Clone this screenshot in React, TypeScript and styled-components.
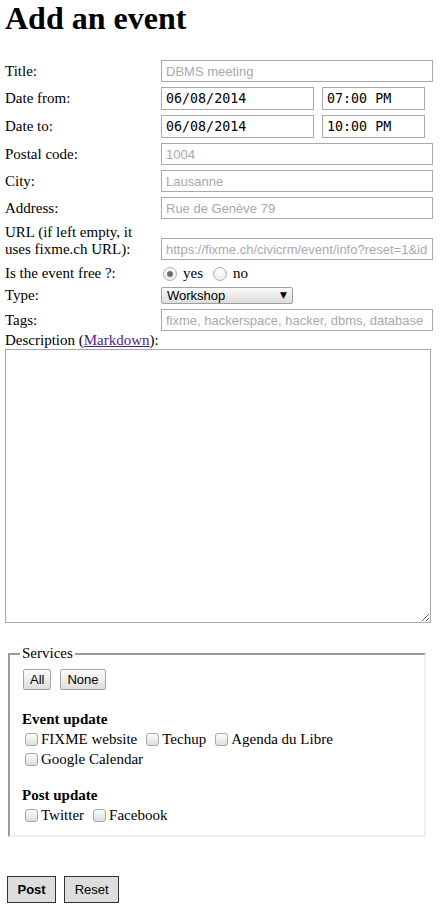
import React from "react";
import styled, { createGlobalStyle } from "styled-components";

const Global = createGlobalStyle`
  html, body { margin: 0; padding: 0; background: #fff; }
  body { font-family: "Liberation Serif", "Times New Roman", serif; font-size: 15px; color: #000; }
  * { box-sizing: border-box; }
`;

const Page = styled.div`
  padding: 0 5px 4px 5px;
  width: 448px;
`;

const Heading = styled.h1`
  margin: 0;
  font-size: 32px;
  line-height: 37px;
  font-weight: bold;
  font-family: "Liberation Serif", "Times New Roman", serif;
`;

const FormGrid = styled.div`
  display: grid;
  grid-template-columns: 156px 272px;
  row-gap: 5px;
  align-items: center;
  margin-top: 23px;
`;

const Label = styled.label<{ $tall?: boolean }>`
  font-size: 15px;
  line-height: 17px;
  align-self: ${(p) => (p.$tall ? "start" : "center")};
  padding-bottom: ${(p) => (p.$tall ? "2px" : "0")};
`;

const TextInput = styled.input<{ $end?: boolean }>`
  width: 272px;
  height: 22px;
  border: 1px solid #a9a9a9;
  padding: 1px 4px;
  font-family: "Liberation Sans", Arial, sans-serif;
  font-size: 13px;
  color: #000;
  outline: none;
  align-self: ${(p) => (p.$end ? "end" : "center")};
  &::placeholder { color: #a9a9a9; }
`;

const DateGroup = styled.div`
  display: flex;
  gap: 8px;
`;

const MonoInput = styled.input<{ $w: number }>`
  width: ${(p) => p.$w}px;
  height: 23px;
  border: 1px solid #a9a9a9;
  padding: 1px 4px;
  font-family: "DejaVu Sans Mono", "Liberation Mono", monospace;
  font-size: 13.33px;
  color: #000;
  outline: none;
`;

const RadioRow = styled.div`
  display: flex;
  align-items: center;
  height: 16px;
  font-size: 15px;
  padding-left: 2px;
`;

const Radio = styled.input`
  appearance: none;
  margin: 0 6px 0 0;
  width: 14px;
  height: 14px;
  border-radius: 50%;
  border: 1px solid #b4b4b4;
  background: radial-gradient(circle at 50% 35%, #ffffff 0%, #e4e4e4 100%);
  position: relative;
  &:checked::after {
    content: "";
    position: absolute;
    left: 3px;
    top: 3px;
    width: 6px;
    height: 6px;
    border-radius: 50%;
    background: #6e6e6e;
  }
`;

const RadioText = styled.span`
  margin-right: 10px;
`;

const SelectWrap = styled.div`
  position: relative;
  width: 132px;
  height: 17px;
`;

const Select = styled.select`
  appearance: none;
  display: block;
  width: 132px;
  height: 17px;
  border: 1px solid #a0a0a0;
  border-radius: 2px;
  background: linear-gradient(#fafafa, #dcdcdc);
  font-family: "Liberation Sans", Arial, sans-serif;
  font-size: 13px;
  padding: 0 0 0 5px;
  color: #000;
  outline: none;
  line-height: 15px;
`;

const SelectArrow = styled.span`
  position: absolute;
  right: 6px;
  top: 3px;
  font-size: 9px;
  line-height: 10px;
  pointer-events: none;
  font-family: "DejaVu Sans", sans-serif;
`;

const DescLabel = styled.div`
  font-size: 15px;
  line-height: 17px;
  margin-top: 1px;
`;

const Link = styled.a`
  color: #551a8b;
  text-decoration: underline;
`;

const TextArea = styled.textarea`
  display: block;
  width: 426px;
  height: 274px;
  border: 1px solid #a9a9a9;
  margin: 0;
  font-family: "Liberation Mono", monospace;
  font-size: 13px;
  outline: none;
`;

const Fieldset = styled.fieldset`
  margin: 22px 0 0 3px;
  width: 418px;
  padding: 0 12px 10px 12px;
  border-style: solid;
  border-width: 2px;
  border-color: #9a9a9a #eeeeee #eeeeee #9a9a9a;
`;

const Legend = styled.legend`
  font-size: 15px;
  line-height: 17px;
  padding: 0 2px;
  margin-left: -2px;
`;

const SmallButtons = styled.div`
  display: flex;
  gap: 9px;
  margin-top: 7px;
  margin-bottom: 19px;
  padding-left: 1px;
`;

const SmallButton = styled.button`
  font-family: "Liberation Sans", Arial, sans-serif;
  font-size: 13px;
  line-height: 15px;
  height: 21px;
  padding: 0 6px;
  border: 1px solid #a3a3a3;
  border-radius: 2px;
  background: linear-gradient(#fcfcfc, #dedede);
  color: #000;
`;

const SectionTitle = styled.div`
  font-weight: bold;
  font-size: 15px;
  line-height: 20px;
  margin-top: 16px;
`;

const CheckList = styled.div`
  display: flex;
  flex-wrap: wrap;
  column-gap: 8px;
  font-size: 15px;
  line-height: 20px;
  padding-left: 2px;
  width: 360px;
`;

const CheckItem = styled.label`
  display: inline-flex;
  align-items: center;
  white-space: nowrap;
`;

const Checkbox = styled.input`
  appearance: none;
  margin: 0 3px 0 1px;
  width: 13px;
  height: 13px;
  border: 1px solid #a8a8a8;
  border-radius: 3px;
  background: linear-gradient(#fdfdfd, #dedede);
`;

const Actions = styled.div`
  display: flex;
  gap: 8px;
  margin-top: 39px;
  padding-left: 2px;
`;

const ActionButton = styled.button<{ $bold?: boolean }>`
  font-family: "Liberation Sans", Arial, sans-serif;
  font-size: 13px;
  font-weight: ${(p) => (p.$bold ? "bold" : "normal")};
  height: 27px;
  padding: 0 9.5px;
  border: 1px solid #333;
  background: #dddddd;
  color: #000;
`;

export default function App() {
  return (
    <Page>
      <Global />
      <Heading>Add an event</Heading>
      <FormGrid>
        <Label>Title:</Label>
        <TextInput placeholder="DBMS meeting" />
        <Label>Date from:</Label>
        <DateGroup>
          <MonoInput $w={153} defaultValue="06/08/2014" />
          <MonoInput $w={103} defaultValue="07:00 PM" />
        </DateGroup>
        <Label>Date to:</Label>
        <DateGroup>
          <MonoInput $w={153} defaultValue="06/08/2014" />
          <MonoInput $w={103} defaultValue="10:00 PM" />
        </DateGroup>
        <Label>Postal code:</Label>
        <TextInput placeholder="1004" />
        <Label>City:</Label>
        <TextInput placeholder="Lausanne" />
        <Label>Address:</Label>
        <TextInput placeholder="Rue de Genève 79" />
        <Label $tall>URL (if left empty, it uses fixme.ch URL):</Label>
        <TextInput $end placeholder="https://fixme.ch/civicrm/event/info?reset=1&id=" />
        <Label>Is the event free ?:</Label>
        <RadioRow>
          <Radio type="radio" name="free" defaultChecked />
          <RadioText>yes</RadioText>
          <Radio type="radio" name="free" />
          <RadioText>no</RadioText>
        </RadioRow>
        <Label>Type:</Label>
        <SelectWrap>
          <Select defaultValue="Workshop">
            <option>Workshop</option>
          </Select>
          <SelectArrow>▼</SelectArrow>
        </SelectWrap>
        <Label>Tags:</Label>
        <TextInput placeholder="fixme, hackerspace, hacker, dbms, database" />
      </FormGrid>
      <DescLabel>
        Description (<Link href="#">Markdown</Link>):
      </DescLabel>
      <TextArea />
      <Fieldset>
        <Legend>Services</Legend>
        <SmallButtons>
          <SmallButton>All</SmallButton>
          <SmallButton>None</SmallButton>
        </SmallButtons>
        <SectionTitle>Event update</SectionTitle>
        <CheckList>
          <CheckItem><Checkbox type="checkbox" />FIXME website</CheckItem>
          <CheckItem><Checkbox type="checkbox" />Techup</CheckItem>
          <CheckItem><Checkbox type="checkbox" />Agenda du Libre</CheckItem>
          <CheckItem><Checkbox type="checkbox" />Google Calendar</CheckItem>
        </CheckList>
        <SectionTitle>Post update</SectionTitle>
        <CheckList>
          <CheckItem><Checkbox type="checkbox" />Twitter</CheckItem>
          <CheckItem><Checkbox type="checkbox" />Facebook</CheckItem>
        </CheckList>
      </Fieldset>
      <Actions>
        <ActionButton $bold>Post</ActionButton>
        <ActionButton>Reset</ActionButton>
      </Actions>
    </Page>
  );
}
